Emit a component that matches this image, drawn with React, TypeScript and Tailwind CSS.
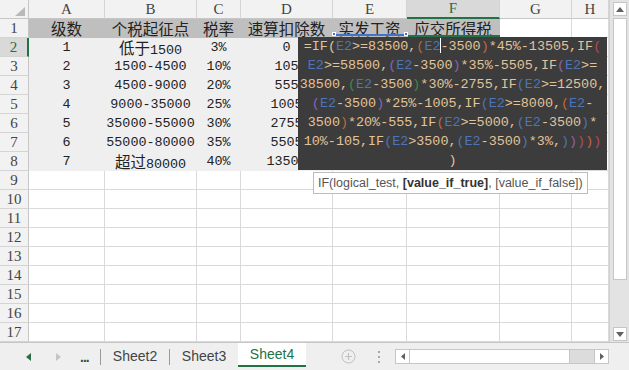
const COLS = "grid grid-cols-[29px_76px_92px_44px_92px_74px_93px_72px_37px]";
const CJK = /([\u4e00-\u9fff]+)/;

function Txt({ s }: { s: string }) {
  return (
    <span className="leading-[19px] h-[19px] whitespace-nowrap">
      {s.split(CJK).map((p, i) =>
        CJK.test(p) ? (
          <span key={i} className="text-[15.5px] leading-[19px] font-['Noto_Sans_CJK_SC',sans-serif]">
            {p}
          </span>
        ) : (
          <span key={i}>{p}</span>
        )
      )}
    </span>
  );
}

const rows = [
  ["1", "低于1500", "3%", "0"],
  ["2", "1500-4500", "10%", "105"],
  ["3", "4500-9000", "20%", "555"],
  ["4", "9000-35000", "25%", "1005"],
  ["5", "35000-55000", "30%", "2755"],
  ["6", "55000-80000", "35%", "5505"],
  ["7", "超过80000", "40%", "13505"],
];

// formula colours
const t = "text-[#e2c39a]";
const b = "text-[#4d74b8]";
const o = "text-[#c4663f]";
const p = "text-[#8d62b2]";
const g = "text-[#3f8a4a]";
const r = "text-[#b34a5e]";

const formula: [string, string][][] = [
  [["=IF", t], ["(", t], ["E2", b], [">=83500,", t], ["(", o], ["E2", b], ["|", ""], ["-3500", t], [")", o], ["*45%-13505,IF", t], ["(", r]],
  [["E2", b], [">=58500,", t], ["(", p], ["E2", b], ["-3500", t], [")", p], ["*35%-5505,IF", t], ["(", p], ["E2", b], [">=", t]],
  [["38500,", t], ["(", g], ["E2", b], ["-3500", t], [")", g], ["*30%-2755,IF", t], ["(", b], ["E2", b], [">=12500,", t]],
  [["(", p], ["E2", b], ["-3500", t], [")", p], ["*25%-1005,IF", t], ["(", b], ["E2", b], [">=8000,", t], ["(", o], ["E2", b], ["-", t]],
  [["3500", t], [")", o], ["*20%-555,IF", t], ["(", o], ["E2", b], [">=5000,", t], ["(", b], ["E2", b], ["-3500", t], [")", b], ["*", t]],
  [["10%-105,IF", t], ["(", b], ["E2", b], [">3500,", t], ["(", b], ["E2", b], ["-3500", t], [")", b], ["*3%,", t], [")", b], [")", p], [")", r], [")", o], [")", r]],
  [[")", t]],
];

function RowHead({ n, active }: { n: number; active?: boolean }) {
  return (
    <div
      className={
        "h-[19px] flex items-center justify-center border-b border-[#d4d4d4] font-['Liberation_Serif',serif] text-[15px] " +
        (active
          ? "bg-[#d9d9d9] text-[#2e6b45] border-r-2 border-r-[#217346]"
          : "bg-[#f2f2f2] text-[#444] border-r border-r-[#c6c6c6]")
      }
    >
      {n}
    </div>
  );
}

function Cell({ children, fill }: { children?: React.ReactNode; fill?: string }) {
  return (
    <div
      className={
        "h-[19px] flex items-center justify-center overflow-visible text-[13.4px] text-[#222] border-r border-b " +
        (fill ?? "bg-white border-[#dadada]")
      }
    >
      {children}
    </div>
  );
}

export default function App() {
  const heads = ["A", "B", "C", "D", "E", "F", "G", "H"];
  return (
    <div className="relative w-[629px] h-[370px] bg-white overflow-hidden flex flex-col font-['Liberation_Mono',monospace]">
      <div className="flex h-[342px]">
        {/* sheet grid */}
        <div className="flex-1 overflow-hidden">
          <div className={COLS}>
            <div className="h-[19px] bg-[#f2f2f2] border-r border-b border-[#c6c6c6] flex items-end justify-end pr-[3px] pb-[2px]">
              <svg width="10" height="9" viewBox="0 0 10 9">
                <polygon points="0,9 10,9 10,0" fill="#b9b9b9" />
              </svg>
            </div>
            {heads.map((h) => (
              <div
                key={h}
                className={
                  "h-[19px] flex items-center justify-center border-r border-r-[#d4d4d4] font-['Liberation_Serif',serif] text-[15px] " +
                  (h === "F"
                    ? "bg-[#d9d9d9] text-[#2e6b45] border-b-2 border-b-[#217346]"
                    : "bg-[#f2f2f2] text-[#444] border-b border-b-[#c6c6c6]")
                }
              >
                {h}
              </div>
            ))}
          </div>

          {/* row 1 */}
          <div className={COLS}>
            <RowHead n={1} />
            {["级数", "个税起征点", "税率", "速算扣除数", "实发工资", "应交所得税"].map((s) => (
              <Cell key={s} fill="bg-[#bfbfbf] border-transparent">
                <Txt s={s} />
              </Cell>
            ))}
            <Cell />
            <Cell />
          </div>

          {rows.map((row, i) => (
            <div key={i} className={COLS}>
              <RowHead n={i + 2} active={i === 0} />
              {row.map((s, j) => (
                <Cell key={j} fill="bg-[#efefef] border-transparent">
                  <Txt s={s} />
                </Cell>
              ))}
              <Cell fill="bg-[#efefef] border-transparent" />
              <Cell fill="bg-[#efefef] border-transparent" />
              <Cell />
              <Cell />
            </div>
          ))}

          {Array.from({ length: 9 }, (_, i) => (
            <div key={i} className={COLS}>
              <RowHead n={i + 9} />
              {heads.map((h) => (
                <Cell key={h} />
              ))}
            </div>
          ))}
        </div>

        {/* vertical scrollbar */}
        <div className="w-[20px] h-full bg-[#e3e3e3] border-l border-[#d0d0d0] flex flex-col items-center pt-[2px] pb-[1px] gap-[2px]">
          <div className="w-[14px] h-[14px] bg-white border border-[#c6c6c6] flex items-center justify-center">
            <svg width="8" height="5" viewBox="0 0 8 5">
              <polygon points="0,5 8,5 4,0" fill="#606060" />
            </svg>
          </div>
          <div className="w-[14px] h-[262px] bg-white border border-[#c6c6c6]" />
          <div className="flex-1" />
          <div className="w-[14px] h-[14px] bg-white border border-[#c6c6c6] flex items-center justify-center">
            <svg width="8" height="5" viewBox="0 0 8 5">
              <polygon points="0,0 8,0 4,5" fill="#606060" />
            </svg>
          </div>
        </div>
      </div>

      {/* sheet tabs */}
      <div className="h-[28px] bg-[#efefef] border-t border-[#c6c6c6] flex items-center font-['Liberation_Sans',sans-serif] text-[14px] text-[#444]">
        <svg className="ml-[26px]" width="5" height="8" viewBox="0 0 5 8">
          <polygon points="5,0 5,8 0,4" fill="#2e6b45" />
        </svg>
        <svg className="ml-[25px]" width="5" height="8" viewBox="0 0 5 8">
          <polygon points="0,0 0,8 5,4" fill="#c4c4c4" />
        </svg>
        <span className="ml-[19px] w-[14px] font-bold text-[#2e5a40] tracking-[-1px] leading-none">...</span>
        <div className="ml-[6px] w-px h-[16px] bg-[#9a9a9a]" />
        <div className="w-[68px] text-center">Sheet2</div>
        <div className="w-px h-[16px] bg-[#9a9a9a]" />
        <div className="w-[68px] text-center">Sheet3</div>
        <div className="w-[68px] self-start h-[24px] bg-white border-b-2 border-[#217346] text-[#217346] flex items-center justify-center">
          Sheet4
        </div>
        <svg className="ml-[35px]" width="15" height="15" viewBox="0 0 15 15">
          <circle cx="7.5" cy="7.5" r="6.5" fill="none" stroke="#c2c2c2" strokeWidth="1" />
          <path d="M7.5 4v7M4 7.5h7" stroke="#c2c2c2" strokeWidth="1.2" />
        </svg>
        <div className="ml-[22px] flex flex-col gap-[3px]">
          <div className="w-[2px] h-[2px] bg-[#a8a8a8]" />
          <div className="w-[2px] h-[2px] bg-[#a8a8a8]" />
          <div className="w-[2px] h-[2px] bg-[#a8a8a8]" />
        </div>
        <div className="ml-[15px] w-[214px] h-[15px] border border-[#c6c6c6] flex bg-[#dcdcdc]">
          <div className="w-[14px] h-full bg-white border-r border-[#c6c6c6] flex items-center justify-center">
            <svg width="4" height="7" viewBox="0 0 4 7">
              <polygon points="4,0 4,7 0,3.5" fill="#606060" />
            </svg>
          </div>
          <div className="w-[160px] h-full bg-white border-r border-[#c6c6c6]" />
          <div className="flex-1" />
          <div className="w-[14px] h-full bg-white border-l border-[#c6c6c6] flex items-center justify-center">
            <svg width="4" height="7" viewBox="0 0 4 7">
              <polygon points="0,0 0,7 4,3.5" fill="#606060" />
            </svg>
          </div>
        </div>
      </div>

      {/* reference highlights of E2 / active F2 */}
      <div className="absolute left-[333px] top-[34px] w-[74px] h-[2px] bg-[#4472c4]" />
      <div className="absolute left-[332px] top-[32px] w-[4px] h-[4px] bg-[#4472c4] border border-white" />
      <div className="absolute left-[404px] top-[32px] w-[4px] h-[4px] bg-[#4472c4] border border-white" />
      <div className="absolute left-[408px] top-[35px] w-[92px] h-[2px] bg-[#217346]" />

      {/* formula editing overlay */}
      <div className="absolute left-[298px] top-[37px] w-[309px] h-[133px] bg-[#3c3c3c] flex flex-col items-center text-[13.4px] leading-[19px]">
        {formula.map((line, i) => (
          <div key={i} className="whitespace-pre">
            {line.map(([s, c], j) =>
              s === "|" ? (
                <span key={j} className="inline-block w-px h-[15px] bg-white align-[-3px] -mr-px" />
              ) : (
                <span key={j} className={c}>
                  {s}
                </span>
              )
            )}
          </div>
        ))}
      </div>

      {/* function tooltip */}
      <div className="absolute left-[313px] top-[172px] h-[22px] px-[4px] bg-white border border-[#bcbcbc] flex items-center font-['Liberation_Sans',sans-serif] text-[12.5px] text-[#555] whitespace-nowrap">
        IF(logical_test,&nbsp;<span className="font-bold text-[#333]">[value_if_true]</span>, [value_if_false])
      </div>
    </div>
  );
}
